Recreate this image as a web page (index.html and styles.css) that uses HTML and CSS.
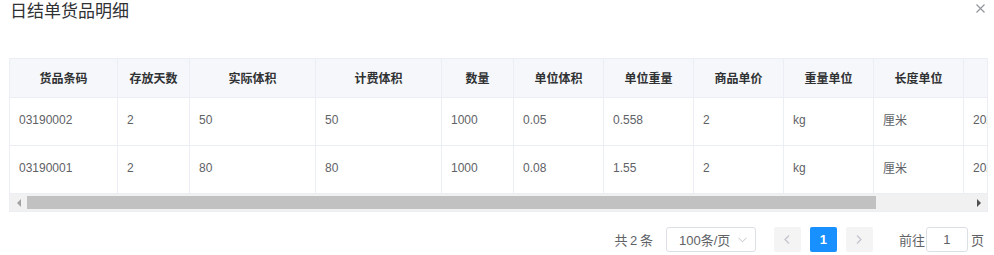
FILE: index.html
```html
<!DOCTYPE html>
<html lang="zh-CN">
<head>
  <meta charset="UTF-8" />
  <title>日结单货品明细</title>
  <link rel="stylesheet" href="styles.css">
</head>
<body>
  <div class="dialog">
    <div class="dialog-header">
      <span class="dialog-title">日结单货品明细</span>
      <span class="dialog-close">
        <svg width="9" height="9" viewBox="0 0 9 9"><path d="M0.5 0.5L8.5 8.5M8.5 0.5L0.5 8.5" stroke="#909399" stroke-width="1.1" fill="none"/></svg>
      </span>
    </div>

    <div class="table-wrap">
      <div class="table-clip">
        <table class="goods">
          <colgroup>
            <col style="width:108px"><col style="width:72px"><col style="width:126px"><col style="width:126px">
            <col style="width:72px"><col style="width:90px"><col style="width:90px"><col style="width:90px">
            <col style="width:90px"><col style="width:90px"><col style="width:160px">
          </colgroup>
          <thead>
            <tr>
              <th>货品条码</th><th>存放天数</th><th>实际体积</th><th>计费体积</th><th>数量</th>
              <th>单位体积</th><th>单位重量</th><th>商品单价</th><th>重量单位</th><th>长度单位</th><th>创建时间</th>
            </tr>
          </thead>
          <tbody>
            <tr>
              <td>03190002</td><td>2</td><td>50</td><td>50</td><td>1000</td>
              <td>0.05</td><td>0.558</td><td>2</td><td>kg</td><td>厘米</td><td>2020-03-19</td>
            </tr>
            <tr>
              <td>03190001</td><td>2</td><td>80</td><td>80</td><td>1000</td>
              <td>0.08</td><td>1.55</td><td>2</td><td>kg</td><td>厘米</td><td>2020-03-19</td>
            </tr>
          </tbody>
        </table>
      </div>
      <div class="hscroll">
        <span class="arrow arrow-left"></span>
        <div class="track"><div class="thumb"></div></div>
        <span class="arrow arrow-right"></span>
      </div>
    </div>

    <div class="pagination">
      <span class="total">共 2 条</span>
      <div class="sizes">
        <span>100条/页</span>
        <svg width="9" height="6" viewBox="0 0 9 6"><path d="M0.5 0.8L4.5 4.8L8.5 0.8" stroke="#c0c4cc" stroke-width="1" fill="none"/></svg>
      </div>
      <button class="btn-nav">
        <svg width="6" height="9" viewBox="0 0 6 9"><path d="M5 0.5L1 4.5L5 8.5" stroke="#c0c4cc" stroke-width="1.2" fill="none"/></svg>
      </button>
      <button class="page active">1</button>
      <button class="btn-nav">
        <svg width="6" height="9" viewBox="0 0 6 9"><path d="M1 0.5L5 4.5L1 8.5" stroke="#c0c4cc" stroke-width="1.2" fill="none"/></svg>
      </button>
      <span class="jumper">前往<span class="jump-input">1</span>页</span>
    </div>
  </div>
</body>
</html>
```

FILE: styles.css
```css
body {
  margin: 0;
  background: white;
  font-family: "Liberation Sans", "Noto Sans CJK SC", sans-serif;
  color: #606266;
}
.dialog {
  width: 994px;
  height: 255px;
}
.dialog-header {
  display: flex;
  justify-content: space-between;
  align-items: flex-start;
  padding: 0 9px 0 10px;
  height: 24px;
}
.dialog-title {
  font-size: 17px;
  line-height: 24px;
  color: #303133;
}
.dialog-close {
  margin-top: 4px;
  line-height: 0;
}
.table-wrap {
  margin: 34px 0 0 9px;
  width: 977px;
  border: 1px solid #ebeef5;
}
.table-clip {
  overflow: hidden;
}
.goods {
  border-collapse: separate;
  border-spacing: 0;
  table-layout: fixed;
  width: 1104px;
  font-size: 12px;
}
.goods th, .goods td {
  border-right: 1px solid #ebeef5;
  border-bottom: 1px solid #ebeef5;
  white-space: nowrap;
  overflow: hidden;
}
.goods th {
  height: 36px;
  padding: 0 0 2px;
  background: #f5f7fa;
  color: #303133;
  font-weight: bold;
  text-align: center;
}
.goods td {
  height: 43px;
  padding: 0 0 4px 9px;
  text-align: left;
  color: #606266;
}
.hscroll {
  display: flex;
  align-items: center;
  height: 17px;
  background: #f1f1f1;
}
.arrow {
  width: 17px;
  height: 17px;
  display: flex;
  align-items: center;
  justify-content: center;
}
.arrow::before {
  content: "";
  border-top: 4px solid transparent;
  border-bottom: 4px solid transparent;
}
.arrow-left::before {
  border-right: 4px solid #a3a3a3;
}
.arrow-right::before {
  border-left: 4px solid #505050;
}
.track {
  flex: 1;
  height: 17px;
  display: flex;
  align-items: center;
}
.thumb {
  width: 849px;
  height: 13px;
  background: #c1c1c1;
}
.pagination {
  display: flex;
  justify-content: flex-end;
  align-items: center;
  margin-top: 15px;
  padding-right: 10px;
  font-size: 13px;
  color: #606266;
}
.total {
  margin-right: 13px;
  word-spacing: -1px;
}
.sizes {
  display: flex;
  align-items: center;
  justify-content: space-between;
  box-sizing: border-box;
  width: 90px;
  height: 25px;
  padding: 0 8px 0 12px;
  border: 1px solid #dcdfe6;
  border-radius: 3px;
  margin-right: 18px;
}
.btn-nav, .page {
  box-sizing: border-box;
  width: 27px;
  height: 25px;
  margin-right: 9px;
  border: none;
  border-radius: 2px;
  background: #f4f4f5;
  display: flex;
  align-items: center;
  justify-content: center;
  padding: 0;
  font-family: inherit;
}
.page.active {
  background: #1890ff;
  color: white;
  font-weight: bold;
  font-size: 13px;
}
.jumper {
  margin-left: 17px;
  display: flex;
  align-items: center;
}
.jump-input {
  box-sizing: border-box;
  width: 42px;
  height: 25px;
  margin: 0 3px 0 1px;
  border: 1px solid #dcdfe6;
  border-radius: 3px;
  display: flex;
  align-items: center;
  justify-content: center;
  color: #606266;
}
```
